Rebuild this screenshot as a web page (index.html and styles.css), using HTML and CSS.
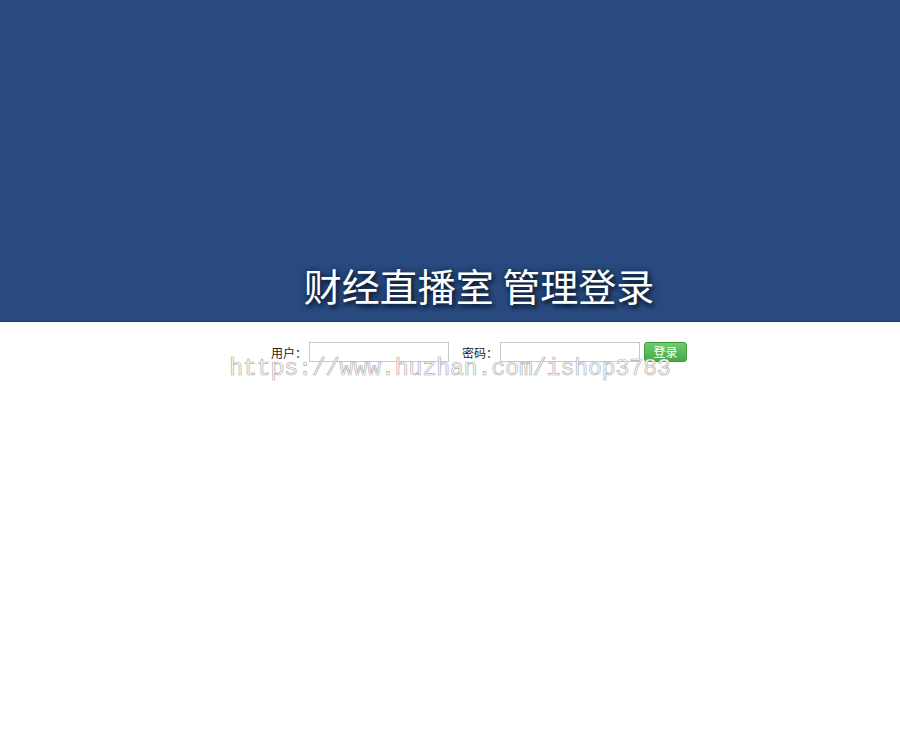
FILE: index.html
```html
<!DOCTYPE html>
<html lang="zh-CN">
<head>
<meta charset="utf-8">
<title>财经直播室 管理登录</title>
<link rel="stylesheet" href="styles.css">
</head>
<body>
<div class="header">
  <h1 class="title">财经直播室 管理登录</h1>
</div>
<div class="login">
  <form class="form-row">
    <label class="label">用户：</label>
    <input class="field" type="text">
    <label class="label label-gap">密码：</label>
    <input class="field" type="password">
    <button class="btn" type="button">登录</button>
  </form>
  <div class="watermark">https://www.huzhan.com/ishop3783</div>
</div>
</body>
</html>
```

FILE: styles.css
```css
html, body {
  margin: 0;
  padding: 0;
  background: #ffffff;
}
body {
  font-family: "Noto Sans CJK SC", "Liberation Sans", sans-serif;
  min-height: 732px;
}
.header {
  height: 322px;
  background: #284a7e;
  border-bottom: 1px solid #1f3c66;
  box-sizing: border-box;
  display: flex;
  align-items: flex-end;
  justify-content: center;
  padding-left: 58px;
  padding-bottom: 12px;
}
.title {
  margin: 0;
  font-size: 38px;
  font-weight: 400;
  line-height: 48px;
  color: #ffffff;
  letter-spacing: 0;
  text-shadow: 2px 3px 4px #0b1a33, 0 0 6px rgba(10, 25, 50, 0.7);
}
.login {
  position: relative;
  padding-top: 20px;
  min-height: 390px;
}
.form-row {
  margin: 0;
  display: flex;
  align-items: center;
  justify-content: center;
  padding-left: 58px;
  height: 20px;
}
.label {
  font-size: 12px;
  color: #222222;
  line-height: 20px;
  margin-right: 2px;
  padding-top: 2px;
}
.label-gap {
  margin-left: 13px;
}
.field {
  width: 140px;
  height: 20px;
  box-sizing: border-box;
  border: 1px solid #c8c8c8;
  background: #ffffff;
  padding: 0 2px;
  margin: 0;
}
.btn {
  margin: 0 0 0 4px;
  width: 43px;
  height: 20px;
  padding: 0;
  border: 1px solid #3e9a3e;
  border-radius: 3px;
  background: linear-gradient(#6fcb6f, #46a946);
  color: #ffffff;
  font-family: "Noto Sans CJK SC", sans-serif;
  font-size: 12px;
  line-height: 18px;
}
.watermark {
  position: absolute;
  z-index: 2;
  left: 0;
  right: 0;
  top: 34px;
  text-align: center;
  font-family: "Liberation Mono", "Courier New", monospace;
  font-size: 23px;
  line-height: 26px;
  color: #ffffff;
  -webkit-text-stroke: 0.7px #b0b0b0;
  pointer-events: none;
}
```
